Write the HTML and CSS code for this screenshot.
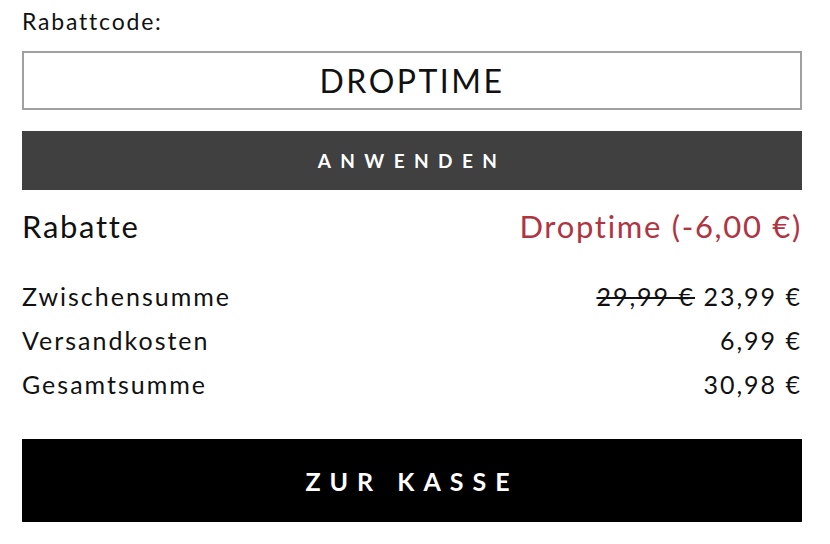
FILE: index.html
```html
<!DOCTYPE html>
<html lang="de">
<head>
    <meta charset="UTF-8">
    <meta name="viewport" content="width=device-width, initial-scale=1.0">
    <title>Warenkorb</title>
    <link rel="stylesheet" href="styles.css">
</head>
<body>
    <div class="cart-summary">
        <label class="coupon-label" for="coupon">Rabattcode:</label>
        <input class="coupon-input" id="coupon" type="text" value="DROPTIME">
        <button class="button apply">Anwenden</button>

        <div class="discount-row">
            <span>Rabatte</span>
            <span class="discount-value">Droptime (-6,00 €)</span>
        </div>

        <div class="totals">
            <div class="total-row">
                <span>Zwischensumme</span>
                <span><s class="old-price">29,99 €</s> 23,99 €</span>
            </div>
            <div class="total-row">
                <span>Versandkosten</span>
                <span>6,99 €</span>
            </div>
            <div class="total-row">
                <span>Gesamtsumme</span>
                <span>30,98 €</span>
            </div>
        </div>

        <button class="button checkout">Zur Kasse</button>
    </div>
</body>
</html>
```

FILE: styles.css
```css
body {
    margin: 0;
    background: white;
    font-family: Lato, "Open Sans", sans-serif;
    color: #111;
}
.cart-summary {
    display: flex;
    flex-direction: column;
    padding: 5px 28px 0 22px;
}
.coupon-label {
    font-size: 23px;
    letter-spacing: 1.8px;
    line-height: 32px;
}
.coupon-input {
    margin-top: 14px;
    height: 59px;
    box-sizing: border-box;
    border: 2px solid #a0a0a0;
    text-align: center;
    font-family: inherit;
    font-size: 32px;
    letter-spacing: 2.5px;
    color: #111;
    outline: none;
}
.button {
    border: none;
    color: white;
    font-family: inherit;
    font-weight: bold;
    text-transform: uppercase;
    cursor: pointer;
}
.button.apply {
    margin-top: 21px;
    height: 59px;
    background: #404040;
    font-size: 19px;
    letter-spacing: 9.4px;
}
.discount-row,
.total-row {
    display: flex;
    justify-content: space-between;
    align-items: baseline;
}
.discount-row {
    margin-top: 14px;
    font-size: 31px;
    letter-spacing: 1.7px;
    line-height: 44px;
}
.discount-value {
    color: #b03442;
}
.totals {
    margin-top: 26px;
    font-size: 25px;
    letter-spacing: 2px;
}
.total-row {
    line-height: 44px;
}
.old-price {
    text-decoration-thickness: 2px;
}
.button.checkout {
    margin-top: 33px;
    height: 83px;
    background: #000;
    font-size: 25px;
    letter-spacing: 9px;
}
```
